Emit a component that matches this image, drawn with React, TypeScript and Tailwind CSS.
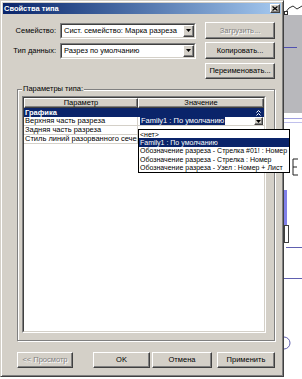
const raised =
  "border border-t-white border-l-white border-r-[#404040] border-b-[#404040] shadow-[inset_-1px_-1px_0_#808080]";

function Arrow() {
  return (
    <svg width="5" height="3" viewBox="0 0 5 3">
      <path d="M0 0h5L2.5 3z" fill="#000" />
    </svg>
  );
}

function Combo({ text }: { text: string }) {
  return (
    <div className="flex items-center w-[136px] h-[16px] bg-white border border-t-[#808080] border-l-[#808080] border-r-white border-b-white">
      <div className="flex items-center flex-1 h-full border border-t-[#404040] border-l-[#404040] border-r-[#d4d0c8] border-b-[#d4d0c8]">
        <span className="flex-1 pl-[2px] whitespace-nowrap">{text}</span>
        <div className={`flex items-center justify-center w-[11px] h-full bg-[#d4d0c8] ${raised}`}>
          <Arrow />
        </div>
      </div>
    </div>
  );
}

function Button({ label, w, disabled }: { label: string; w: string; disabled?: boolean }) {
  return (
    <div
      className={`flex items-center justify-center h-full bg-[#d4d0c8] ${raised} ${w} ${
        disabled ? "text-[#808080] [text-shadow:1px_1px_0_#fff]" : ""
      }`}
    >
      {label}
    </div>
  );
}

const rows = ["Верхняя часть разреза", "Задняя часть разреза", "Стиль линий разорванного сечени"];

const options = [
  "<нет>",
  "Family1 : По умолчанию",
  "Обозначение разреза - Стрелка #01! : Номер",
  "Обозначение разреза - Стрелка : Номер",
  "Обозначение разреза - Узел : Номер + Лист",
];

export default function App() {
  return (
    <div className="relative flex w-[302px] h-[379px] overflow-hidden bg-white text-black text-[7.5px] leading-none font-['Liberation_Sans',Arial,sans-serif]">
      {/* dialog */}
      <div className="flex flex-col shrink-0 w-[284px] h-[377px] p-[2px] bg-[#d4d0c8] border border-t-[#d4d0c8] border-l-[#d4d0c8] border-r-[#404040] border-b-[#404040] shadow-[inset_1px_1px_0_#fff,inset_-1px_-1px_0_#808080]">
        <div className="flex items-center justify-between h-[11px] pl-[1px] pr-[1px] bg-linear-to-r from-[#0a246a] to-[#a6caf0]">
          <span className="font-bold text-white text-[7.5px]">Свойства типа</span>
          <div className={`flex items-center justify-center w-[10px] h-[9px] bg-[#d4d0c8] ${raised}`}>
            <svg width="6" height="5" viewBox="0 0 6 5">
              <path d="M0.5 0.5l5 4M5.5 0.5l-5 4" stroke="#000" strokeWidth="1.3" />
            </svg>
          </div>
        </div>

        <div className="flex items-center mt-[8px] h-[17px]">
          <span className="w-[53px] text-right">Семейство:</span>
          <div className="ml-[4px]">
            <Combo text="Сист. семейство: Марка разреза" />
          </div>
          <div className="ml-[9px] h-full">
            <Button label="Загрузить..." w="w-[70px]" disabled />
          </div>
        </div>

        <div className="flex items-center mt-[3px] h-[17px]">
          <span className="w-[53px] text-right">Тип данных:</span>
          <div className="ml-[4px]">
            <Combo text="Разрез по умолчанию" />
          </div>
          <div className="ml-[9px] h-full">
            <Button label="Копировать..." w="w-[70px]" />
          </div>
        </div>

        <div className="mt-[4px] ml-[202px] h-[16px]">
          <Button label="Переименовать..." w="w-[70px]" />
        </div>

        {/* group box */}
        <div className="relative mt-[10px] ml-[14px] w-[258px] h-[252px] pt-[6px] pl-[4px] border border-[#808080] shadow-[1px_1px_0_#fff,inset_1px_1px_0_#fff]">
          <span className="absolute -top-[5px] left-[4px] px-[1px] bg-[#d4d0c8]">Параметры типа:</span>
          <div className="w-[244px] h-[237px] bg-white border border-t-[#808080] border-l-[#808080] border-r-white border-b-white">
            <div className="flex flex-col h-full border border-t-[#404040] border-l-[#404040] border-r-[#d4d0c8] border-b-[#d4d0c8]">
              <div className="grid grid-cols-[114px_126px] h-[10px]">
                <div className={`flex items-center justify-center bg-[#d4d0c8] ${raised}`}>Параметр</div>
                <div className={`flex items-center justify-center bg-[#d4d0c8] ${raised}`}>Значение</div>
              </div>
              <div className="flex items-center justify-between h-[9px] pl-[1px] pr-[3px] bg-[#0a246a] text-white font-bold">
                <span>Графика</span>
                <svg width="5" height="6" viewBox="0 0 5 6">
                  <path d="M0.5 2.5l2-2 2 2M0.5 5.5l2-2 2 2" stroke="#fff" fill="none" />
                </svg>
              </div>
              {rows.map((r, i) => (
                <div key={r} className="grid grid-cols-[114px_126px] h-[9px] border-b border-[#d4d0c8]">
                  <div className="flex items-center pl-[1px] overflow-hidden whitespace-nowrap border-r border-[#d4d0c8]">
                    {r}
                  </div>
                  <div className="flex items-center justify-between pl-[2px] pr-[1px]">
                    {i === 0 && (
                      <>
                        <span className="h-full flex items-center px-[1px] bg-[#0a246a] text-white">Family1 : По умолчанию</span>
                        <div className={`flex items-center justify-center w-[9px] h-[8px] bg-[#d4d0c8] ${raised}`}>
                          <Arrow />
                        </div>
                      </>
                    )}
                  </div>
                </div>
              ))}
            </div>
          </div>
        </div>

        <div className="flex mt-[11px] h-[16px]">
          <div className="ml-[14px] h-full">
            <Button label="<< Просмотр" w="w-[56px]" disabled />
          </div>
          <div className="ml-[20px] h-full">
            <Button label="OK" w="w-[57px]" />
          </div>
          <div className="ml-[2px] h-full">
            <Button label="Отмена" w="w-[60px]" />
          </div>
          <div className="ml-[5px] h-full">
            <Button label="Применить" w="w-[58px]" />
          </div>
        </div>
      </div>

      {/* drawing behind the dialog */}
      <div className="relative flex-1 h-full">
        <svg className="absolute inset-0" width="18" height="379" viewBox="0 0 18 379">
          <rect x="0" y="15" width="18" height="98" fill="#b8b8bc" />
          <polyline points="1,13 5,8 9,6 13,9 18,6" fill="none" stroke="#303030" />
          <rect x="0.5" y="11.5" width="3" height="3" fill="#fff" stroke="#303030" />
          <line x1="0" y1="47.5" x2="13" y2="47.5" stroke="#5050b0" />
          <line x1="0" y1="118.5" x2="18" y2="118.5" stroke="#a0a0e0" />
          <line x1="0" y1="122.5" x2="18" y2="122.5" stroke="#c0c0ec" />
          <path d="M9 159v16M9 159h5M9 167h4M9 175h5" fill="none" stroke="#202020" />
          <rect x="0" y="190" width="3" height="35" fill="#8080e8" />
          <rect x="0.5" y="225.5" width="4" height="17" fill="none" stroke="#404040" />
          <line x1="2" y1="247.5" x2="18" y2="247.5" stroke="#6060b0" />
          <line x1="0" y1="278.5" x2="18" y2="278.5" stroke="#6060b0" />
          <path d="M0 337a6 6 0 0 1 0 12" fill="none" stroke="#6060b0" />
        </svg>
      </div>

      {/* open drop-down list */}
      <div className="absolute left-[138px] top-[129px] w-[152px] h-[44px] flex flex-col bg-white border border-black text-[7px]">
        {options.map((o, i) => (
          <div
            key={o}
            className={`flex items-center h-[8.4px] pl-[1px] whitespace-nowrap ${
              i === 1 ? "bg-[#0a246a] text-white" : ""
            }`}
          >
            {o}
          </div>
        ))}
      </div>
    </div>
  );
}
